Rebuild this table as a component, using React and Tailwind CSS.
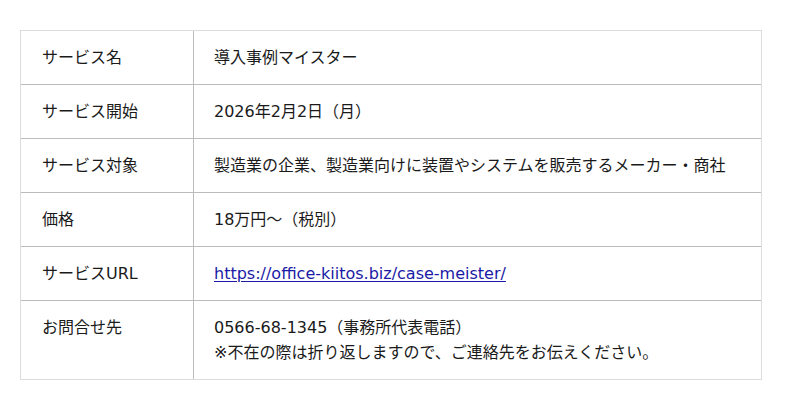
export default function App() {
  const rows = [
    ['サービス名', '導入事例マイスター'],
    ['サービス開始', '2026年2月2日（月）'],
    ['サービス対象', '製造業の企業、製造業向けに装置やシステムを販売するメーカー・商社'],
    ['価格', '18万円〜（税別）'],
    [
      'サービスURL',
      <a href="#" className="text-[#1a1aa6] underline underline-offset-2">
        https://office-kiitos.biz/case-meister/
      </a>,
    ],
    [
      'お問合せ先',
      <>
        0566-68-1345（事務所代表電話）
        <br />
        ※不在の際は折り返しますので、ご連絡先をお伝えください。
      </>,
    ],
  ]

  return (
    <div className="w-[800px] h-[410px] bg-white pt-[30px] pl-[20px] font-['DejaVu_Sans','Noto_Sans_CJK_JP',sans-serif] text-[16px] leading-[25px] text-[#1a1a1a]">
      <div className="w-[742px] border border-[#dcdcdc]">
        {rows.map(([label, value], i) => (
          <div
            key={i}
            className={
              'grid grid-cols-[173px_1fr] ' +
              (i < rows.length - 1 ? 'border-b border-[#bcbcbc]' : '')
            }
          >
            <div className="border-r border-[#bcbcbc] pl-[21px] py-[14px]">{label}</div>
            <div className="pl-[20px] py-[14px]">{value}</div>
          </div>
        ))}
      </div>
    </div>
  )
}
